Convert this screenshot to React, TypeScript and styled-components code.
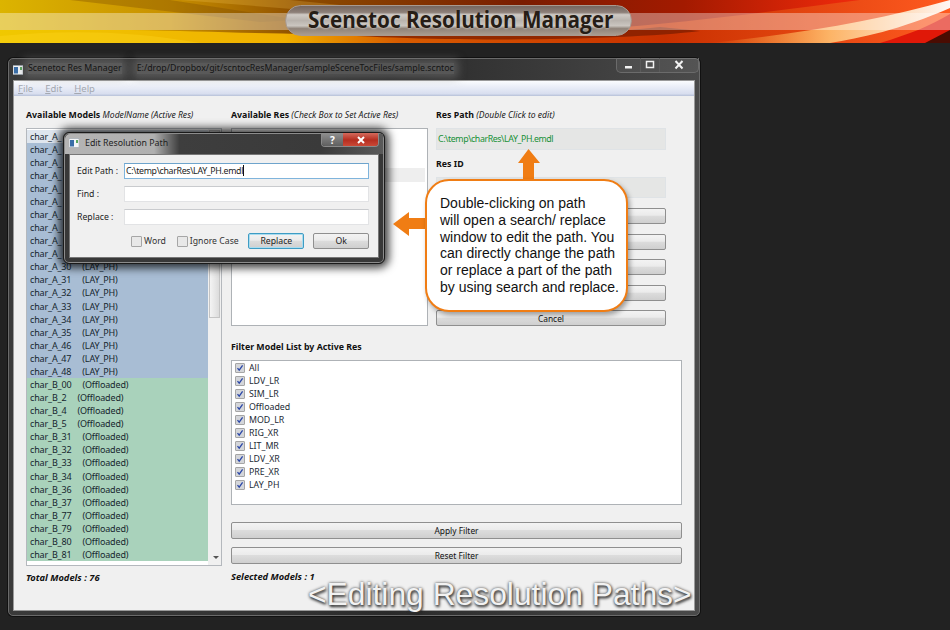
import React from "react";
import styled, { createGlobalStyle } from "styled-components";

const GlobalStyle = createGlobalStyle`
    html, body {
        margin: 0;
        padding: 0;
        background: #222222;
    }
    body {
        width: 950px;
        height: 630px;
        overflow: hidden;
        font-family: "Noto Sans", "Liberation Sans", sans-serif;
    }
`;

const Page = styled.div`
    width: 950px;
    height: 630px;
    background: #222222;
    display: flex;
    flex-direction: column;
    overflow: hidden;
`;

const Banner = styled.header`
    position: relative;
    height: 43px;
    flex: none;
    display: flex;
    justify-content: center;
    align-items: flex-start;
    padding: 5px 33px 0 0;
    box-sizing: border-box;
    overflow: hidden;
`;

const BannerArt = styled.svg`
    position: absolute;
    inset: 0;
`;

const Pill = styled.div`
    position: relative;
    width: 347px;
    height: 31px;
    box-sizing: border-box;
    padding: 0 0 3px 5px;
    border-radius: 16px;
    border: 1px solid #a89a90;
    background: linear-gradient(
        180deg,
        #75665f 0%,
        #8d8079 22%,
        #cfcac5 30%,
        #b9b3ad 50%,
        #cbc6c0 68%,
        #8f8379 78%,
        #a99c8f 100%
    );
    display: flex;
    justify-content: center;
    align-items: center;
`;

const PillTitle = styled.h1`
    margin: 0;
    font-family: "Open Sans", "Noto Sans", sans-serif;
    font-size: 23px;
    font-weight: 700;
    color: #261d16;
    white-space: nowrap;
    transform: scaleX(0.9);
    letter-spacing: 0;
    text-shadow: 0 1px 2px rgba(255, 255, 255, 0.35);
`;

const Win = styled.div`
    position: relative;
    width: 692px;
    height: 558px;
    margin: 15px 0 0 8px;
    box-sizing: border-box;
    padding: 0 5px 4px;
    border: 1px solid #6a6a6a;
    border-radius: 5px;
    background: linear-gradient(90deg, #3a3a3a 0%, #333 40%, #2a2a2a 55%, #4a4a4a 100%);
    box-shadow: 0 0 0 1px #111;
    display: flex;
    flex-direction: column;
`;

const TitleBar = styled.div`
    height: 21px;
    flex: none;
    display: flex;
    align-items: center;
    margin-left: -1px;
`;

const TitleIcon = styled.span`
    display: flex;
    margin-right: 5px;
`;

const TitleText = styled.span`
    font-size: 8.8px;
    color: #141414;
    white-space: pre;
    background: rgba(125, 125, 125, 0.5);
    box-shadow: 0 0 8px 4px rgba(125, 125, 125, 0.5);
    line-height: 11px;
    transform: translateY(-1px);
`;

const TitlePath = styled(TitleText)`
    margin-left: 15px;
`;

const CaptionGroup = styled.div`
    position: absolute;
    top: -1px;
    right: 0;
    width: 83px;
    height: 15px;
    box-sizing: border-box;
    border: 1px solid #6b6b6b;
    border-top: none;
    border-radius: 0 0 5px 5px;
    display: grid;
    grid-template-columns: 24px 19px 1fr;
    background: rgba(255, 255, 255, 0.06);
`;

const CaptionCell = styled.div<{ $divider?: boolean }>`
    display: flex;
    align-items: center;
    justify-content: center;
    color: #fff;
    border-right: ${(p) => (p.$divider ? "1px solid #5a5a5a" : "none")};
`;

const Client = styled.div`
    flex: 1;
    display: flex;
    flex-direction: column;
    background: #f0f0f0;
    border: 1px solid #9a9a9a;
    margin: 0 -1px;
    min-height: 0;
`;

const MenuBar = styled.nav`
    height: 15px;
    flex: none;
    display: flex;
    gap: 12px;
    padding-left: 4px;
    align-items: center;
    background: linear-gradient(180deg, #fbfcfe 0%, #eef1f9 30%, #d8deef 85%, #b6c0d8 100%);
`;

const MenuItem = styled.span`
    font-size: 9.5px;
    color: #a4a8b0;
    &::first-letter {
        text-decoration: underline;
    }
`;

const Body = styled.div`
    display: grid;
    grid-template-columns: 196px 451px;
    column-gap: 9px;
    padding: 12px 0 0 12px;
`;

const Column = styled.div`
    display: flex;
    flex-direction: column;
`;

const Label = styled.div`
    height: 20px;
    font-size: 8.8px;
    font-weight: 700;
    color: #111;
    line-height: 14px;
    white-space: nowrap;
    em {
        font-weight: 400;
        font-size: 8.6px;
        color: #222;
    }
`;

const ModelList = styled.div`
    position: relative;
    height: 438px;
    box-sizing: border-box;
    border: 1px solid #b4b8bd;
    display: flex;
    background: #fff;
    overflow: hidden;
`;

const Rows = styled.div`
    width: 181px;
    flex: none;
    padding-top: 0.5px;
`;

const Row = styled.div<{ $tone: "first" | "blue" | "green" }>`
    height: 13.08px;
    line-height: 13px;
    padding-left: 3px;
    font-size: 9px;
    letter-spacing: -0.15px;
    color: #16262e;
    white-space: pre;
    background: ${(p) =>
        p.$tone === "first" ? "#dfe6ee" : p.$tone === "blue" ? "#a8bdd4" : "#a9d2bb"};
`;

const ScrollTrack = styled.div`
    flex: 1;
    background: #f0f0f0;
    position: relative;
`;

const ScrollThumb = styled.div`
    position: absolute;
    top: 1px;
    left: 1px;
    right: 1px;
    height: 188px;
    box-sizing: border-box;
    border: 1px solid #c4c4c4;
    background: linear-gradient(90deg, #f4f4f4, #dcdcdc);
`;

const ScrollArrow = styled.div`
    position: absolute;
    bottom: 6px;
    left: 5px;
    width: 0;
    height: 0;
    border: 3px solid transparent;
    border-top: 3px solid #555;
    border-bottom: none;
`;

const Footer = styled.div<{ $top?: number }>`
    margin-top: ${(p) => p.$top ?? 6}px;
    font-size: 9.3px;
    font-weight: 700;
    font-style: italic;
    color: #111;
    line-height: 12px;
`;

const TopRow = styled.div`
    display: grid;
    grid-template-columns: 197px 230px;
    column-gap: 8px;
`;

const ResList = styled.div`
    height: 198px;
    box-sizing: border-box;
    border: 1px solid #aeb2b6;
    background: #fff;
    padding-top: 39px;
`;

const ResRow = styled.div`
    height: 14px;
    background: #eeeeee;
    margin-right: 2px;
`;

const ReadBox = styled.div`
    height: 22px;
    box-sizing: border-box;
    border: 1px solid #dfe3e6;
    background: #e5e6e5;
    font-size: 8.8px;
    letter-spacing: -0.4px;
    line-height: 20px;
    padding-left: 1px;
    color: #159035;
    white-space: nowrap;
`;

const SubLabel = styled(Label)`
    margin-top: 7px;
    height: 20px;
`;

const IdBox = styled(ReadBox)`
    height: 21px;
`;

const ButtonStack = styled.div`
    margin-top: 10px;
    display: flex;
    flex-direction: column;
    gap: 9.5px;
`;

const Btn = styled.div<{ $h?: number }>`
    height: ${(p) => p.$h ?? 16}px;
    box-sizing: border-box;
    border: 1px solid #8f8f8f;
    border-radius: 2px;
    background: linear-gradient(180deg, #f3f3f3 0%, #ebebeb 45%, #dcdcdc 50%, #cfcfcf 100%);
    font-size: 8.4px;
    color: #111;
    display: flex;
    align-items: center;
    justify-content: center;
`;

const FilterLabel = styled(Label)`
    margin-top: 14px;
    height: 20px;
`;

const FilterList = styled.div`
    height: 145px;
    box-sizing: border-box;
    border: 1px solid #aeb2b6;
    background: #fff;
    padding: 0 0 0 3px;
    display: flex;
    flex-direction: column;
`;

const FilterRow = styled.div`
    height: 13.05px;
    display: flex;
    align-items: center;
    gap: 4px;
    font-size: 8.8px;
    color: #222a35;
`;

const CheckBox = styled.span<{ $size?: number; $checked?: boolean }>`
    width: ${(p) => p.$size ?? 10}px;
    height: ${(p) => p.$size ?? 10}px;
    box-sizing: border-box;
    flex: none;
    border: 1px solid #a6a6a6;
    border-radius: 1px;
    background: ${(p) => (p.$checked ? "#d4d6da" : "#e8e8e8")};
    display: flex;
    align-items: center;
    justify-content: center;
`;

const FilterButtons = styled.div`
    margin-top: 17px;
    display: flex;
    flex-direction: column;
    gap: 8px;
`;

const Dialog = styled.div`
    position: absolute;
    left: 54px;
    top: 73px;
    width: 322px;
    height: 132px;
    box-sizing: border-box;
    padding: 0 5px 5px;
    border: 1px solid #1a1a1a;
    border-radius: 6px;
    background: #383838;
    box-shadow: 0 0 9px 4px rgba(0, 0, 0, 0.75), inset 0 0 0 1px #8c8c8c;
    display: flex;
    flex-direction: column;
`;

const DialogTitle = styled.div`
    height: 20px;
    flex: none;
    display: flex;
    align-items: center;
    gap: 6px;
    margin: 1px -4px 0;
    padding: 0 0 2px 4px;
    box-sizing: border-box;
    border-radius: 5px 0 0 0;
    font-size: 8.8px;
    color: #222;
    background: linear-gradient(90deg, #b4b4b4 0%, #b0b0b0 28%, #3e3e3e 36%, #3a3a3a 80%, #5a5a5a 100%);
`;

const DialogCaption = styled.div`
    position: absolute;
    top: 0;
    right: 5px;
    width: 58px;
    height: 14px;
    display: grid;
    grid-template-columns: 21px 1fr;
    border: 1px solid #8a8a8a;
    border-top: none;
    border-radius: 0 0 4px 4px;
    overflow: hidden;
    box-sizing: border-box;
    font-size: 10px;
    font-weight: 700;
    color: #fff;
`;

const HelpCell = styled.div`
    background: linear-gradient(180deg, #8f8f8f, #5c5c5c);
    display: flex;
    align-items: center;
    justify-content: center;
`;

const CloseCell = styled.div`
    background: linear-gradient(180deg, #d46a5c 0%, #b52e20 50%, #cf4d3a 100%);
    display: flex;
    align-items: center;
    justify-content: center;
`;

const DialogBody = styled.div`
    flex: 1;
    border: 1px solid #777;
    background: #f0f0f0;
    padding: 8px 9px 0 7px;
    display: flex;
    flex-direction: column;
    gap: 7px;
`;

const FieldRow = styled.div`
    display: flex;
    align-items: center;
    height: 16px;
`;

const FieldLabel = styled.span`
    width: 47px;
    flex: none;
    font-size: 8.7px;
    color: #222;
    white-space: nowrap;
`;

const FieldInput = styled.div<{ $active?: boolean }>`
    flex: 1;
    height: 16px;
    box-sizing: border-box;
    border: 1px solid ${(p) => (p.$active ? "#7fb4dc" : "#e2e3e5")};
    border-top-color: ${(p) => (p.$active ? "#6ea4cc" : "#c9cbce")};
    background: #fff;
    font-size: 8.8px;
    letter-spacing: -0.33px;
    line-height: 14px;
    padding-left: 1px;
    color: #222;
    white-space: nowrap;
`;

const Caret = styled.span`
    display: inline-block;
    width: 1px;
    height: 11px;
    background: #111;
    vertical-align: -2px;
`;

const DialogActions = styled.div`
    margin-top: 1px;
    display: flex;
    align-items: center;
    padding-left: 54px;
    font-size: 8.7px;
    color: #333;
    white-space: nowrap;
`;

const OptionLabel = styled.label<{ $width: number }>`
    display: flex;
    align-items: center;
    gap: 2px;
    width: ${(p) => p.$width}px;
`;

const DialogBtn = styled.div<{ $primary?: boolean }>`
    width: 56px;
    height: 16px;
    box-sizing: border-box;
    border: 1px solid ${(p) => (p.$primary ? "#3e9cc4" : "#8f8f8f")};
    box-shadow: ${(p) => (p.$primary ? "inset 0 0 0 1px #a9dcef" : "none")};
    border-radius: 2px;
    background: linear-gradient(180deg, #f3f3f3 0%, #ebebeb 45%, #dcdcdc 50%, #cfcfcf 100%);
    display: flex;
    align-items: center;
    justify-content: center;
    font-size: 8.7px;
    color: #222;
    margin-right: 9px;
    &:last-child {
        margin-right: 0;
    }
`;

const Callout = styled.div`
    position: absolute;
    left: 416px;
    top: 120px;
    width: 203px;
    height: 133px;
    box-sizing: border-box;
    padding: 14px 0 0 13px;
    background: #fff;
    border: 2px solid #f07d14;
    border-radius: 24px;
    box-shadow: 2px 3px 5px rgba(0, 0, 0, 0.35);
    font-family: "Liberation Sans", Arial, sans-serif;
    font-size: 14px;
    line-height: 16.8px;
    color: #111;
    white-space: nowrap;
`;

const Arrow = styled.svg<{ $x: number; $y: number }>`
    position: absolute;
    left: ${(p) => p.$x}px;
    top: ${(p) => p.$y}px;
`;

const Caption = styled.div`
    position: absolute;
    left: 299px;
    bottom: 4px;
    font-family: "Liberation Sans", Arial, sans-serif;
    font-size: 31.8px;
    line-height: 34px;
    color: #f2f2f2;
    white-space: nowrap;
    text-shadow: 0 0 3px #444, 1px 2px 3px #222;
`;

const Grip = styled.div`
    position: absolute;
    right: 6px;
    bottom: 5px;
    width: 6px;
    height: 6px;
    background-image: radial-gradient(#aaa 40%, transparent 45%);
    background-size: 2px 2px;
`;

// the first ten rows sit under the dialog, only their prefix shows
const COVERED_ROWS = 10;
const MODELS_A = ["30", "31", "32", "33", "34", "35", "46", "47", "48"];
const MODELS_B = ["00", "2", "4", "5", "31", "32", "33", "34", "36", "37", "77", "79", "80", "81"];
const FILTERS = ["All", "LDV_LR", "SIM_LR", "Offloaded", "MOD_LR", "RIG_XR", "LIT_MR", "LDV_XR", "PRE_XR", "LAY_PH"];

function AppIcon() {
    return (
        <svg width="10" height="10" viewBox="0 0 10 10" style={{ flex: "none" }}>
            <rect x="0" y="0.5" width="10" height="9" fill="#f4f6f8" stroke="#9aa4ae" strokeWidth="0.6" />
            <rect x="1" y="2" width="4" height="6.5" fill="#3a6ea8" />
            <rect x="7" y="2" width="2" height="3" fill="#5aa860" />
        </svg>
    );
}

function Tick() {
    return (
        <svg width="8" height="8" viewBox="0 0 8 8">
            <path d="M1.5 4.2 L3.2 6.2 L6.6 1.4" fill="none" stroke="#2b47a8" strokeWidth="1.3" />
        </svg>
    );
}

function BannerBackground() {
    return (
        <BannerArt width="950" height="43" viewBox="0 0 950 43" preserveAspectRatio="none">
            <defs>
                <linearGradient id="base" x1="0" x2="1" y1="0" y2="0">
                    <stop offset="0" stopColor="#dcb400" />
                    <stop offset="0.18" stopColor="#c89000" />
                    <stop offset="0.32" stopColor="#8c4c00" />
                    <stop offset="0.55" stopColor="#7a1c00" />
                    <stop offset="0.72" stopColor="#a31a00" />
                    <stop offset="0.88" stopColor="#e8280a" />
                    <stop offset="1" stopColor="#ff3a18" />
                </linearGradient>
                <linearGradient id="low" x1="0" x2="1" y1="0" y2="0">
                    <stop offset="0" stopColor="#f0c800" />
                    <stop offset="0.3" stopColor="#f0b000" />
                    <stop offset="0.42" stopColor="#d85c00" />
                    <stop offset="0.7" stopColor="#c83000" />
                    <stop offset="1" stopColor="#ff5a20" />
                </linearGradient>
                <linearGradient id="glow" x1="0" x2="1" y1="0" y2="0">
                    <stop offset="0" stopColor="#ffb040" stopOpacity="0" />
                    <stop offset="0.5" stopColor="#ffc070" stopOpacity="0.9" />
                    <stop offset="1" stopColor="#ffffff" stopOpacity="0.95" />
                </linearGradient>
            </defs>
            <rect width="950" height="43" fill="url(#base)" />
            <path d="M0 30 L130 30 C240 32 300 36 470 34 C620 32 720 18 860 0 L950 0 L950 43 L0 43 Z" fill="url(#low)" />
            <path d="M300 32 C420 38 560 38 660 27 L700 31 C620 41 420 43 300 32 Z" fill="#7c1e00" opacity="0.75" />
            <path d="M70 0 L170 0 L300 20 L260 22 Z" fill="#7a4a00" opacity="0.35" />
            <path d="M180 0 L290 0 L420 13 L380 16 Z" fill="#ffd060" opacity="0.22" />
            <path d="M0 36 C60 30 130 30 200 43 L0 43 Z" fill="#ffd820" opacity="0.35" />
            <path d="M710 43 C800 34 880 20 950 0 L950 8 C900 30 860 38 830 43 Z" fill="url(#glow)" />
            <path d="M880 43 C910 34 930 26 950 14 L950 43 Z" fill="#e01808" />
            <path d="M925 43 L950 30 L950 43 Z" fill="#4a0c02" />
            <rect x="0" y="13" width="950" height="17" fill="#ffffff" opacity="0.36" />
        </BannerArt>
    );
}

export default function App() {
    return (
        <Page>
            <GlobalStyle />
            <Banner>
                <BannerBackground />
                <Pill>
                    <PillTitle>Scenetoc Resolution Manager</PillTitle>
                </Pill>
            </Banner>

            <Win>
                <TitleBar>
                    <TitleIcon><AppIcon /></TitleIcon>
                    <TitleText>Scenetoc Res Manager</TitleText>
                    <TitlePath>E:/drop/Dropbox/git/scntocResManager/sampleSceneTocFiles/sample.scntoc</TitlePath>
                </TitleBar>
                <CaptionGroup>
                    <CaptionCell $divider>
                        <svg width="10" height="10" viewBox="0 0 10 10"><rect x="1" y="6" width="7" height="2.5" fill="#f2f2f2" /></svg>
                    </CaptionCell>
                    <CaptionCell $divider>
                        <svg width="10" height="10" viewBox="0 0 10 10"><rect x="1.5" y="1.5" width="7" height="6" fill="none" stroke="#f2f2f2" strokeWidth="1.5" /></svg>
                    </CaptionCell>
                    <CaptionCell>
                        <svg width="10" height="10" viewBox="0 0 10 10"><path d="M1.5 1 L8.5 8.5 M8.5 1 L1.5 8.5" stroke="#f2f2f2" strokeWidth="2" /></svg>
                    </CaptionCell>
                </CaptionGroup>

                <Client>
                    <MenuBar>
                        <MenuItem>File</MenuItem>
                        <MenuItem>Edit</MenuItem>
                        <MenuItem>Help</MenuItem>
                    </MenuBar>
                    <Body>
                        <Column>
                            <Label>Available Models <em>ModelName (Active Res)</em></Label>
                            <ModelList>
                                <Rows>
                                    {Array.from({ length: COVERED_ROWS }, (_, i) => (
                                        <Row key={"covered" + i} $tone={i === 0 ? "first" : "blue"}>char_A_</Row>
                                    ))}
                                    {MODELS_A.map((id) => (
                                        <Row key={"a" + id} $tone="blue">{`char_A_${id}     (LAY_PH)`}</Row>
                                    ))}
                                    {MODELS_B.map((id) => (
                                        <Row key={"b" + id} $tone="green">{`char_B_${id}     (Offloaded)`}</Row>
                                    ))}
                                </Rows>
                                <ScrollTrack>
                                    <ScrollThumb />
                                    <ScrollArrow />
                                </ScrollTrack>
                            </ModelList>
                            <Footer>Total Models : 76</Footer>
                        </Column>

                        <Column>
                            <TopRow>
                                <Column>
                                    <Label>Available Res <em>(Check Box to Set Active Res)</em></Label>
                                    <ResList>
                                        <ResRow />
                                    </ResList>
                                </Column>
                                <Column>
                                    <Label>Res Path <em>(Double Click to edit)</em></Label>
                                    <ReadBox>C:\temp\charRes\LAY_PH.emdl</ReadBox>
                                    <SubLabel>Res ID</SubLabel>
                                    <IdBox />
                                    <ButtonStack>
                                        <Btn />
                                        <Btn />
                                        <Btn />
                                        <Btn />
                                        <Btn>Cancel</Btn>
                                    </ButtonStack>
                                </Column>
                            </TopRow>
                            <FilterLabel>Filter Model List by Active Res</FilterLabel>
                            <FilterList>
                                {FILTERS.map((name) => (
                                    <FilterRow key={name}>
                                        <CheckBox $checked><Tick /></CheckBox>
                                        {name}
                                    </FilterRow>
                                ))}
                            </FilterList>
                            <FilterButtons>
                                <Btn $h={17}>Apply Filter</Btn>
                                <Btn $h={17}>Reset Filter</Btn>
                            </FilterButtons>
                            <Footer $top={7}>Selected Models : 1</Footer>
                        </Column>
                    </Body>
                </Client>

                <Dialog>
                    <DialogTitle>
                        <AppIcon />
                        Edit Resolution Path
                    </DialogTitle>
                    <DialogCaption>
                        <HelpCell>?</HelpCell>
                        <CloseCell>
                            <svg width="10" height="10" viewBox="0 0 10 10"><path d="M2 2 L8 8 M8 2 L2 8" stroke="#fff" strokeWidth="2" /></svg>
                        </CloseCell>
                    </DialogCaption>
                    <DialogBody>
                        <FieldRow>
                            <FieldLabel>Edit Path :</FieldLabel>
                            <FieldInput $active>C:\temp\charRes\LAY_PH.emdl<Caret /></FieldInput>
                        </FieldRow>
                        <FieldRow>
                            <FieldLabel>Find :</FieldLabel>
                            <FieldInput />
                        </FieldRow>
                        <FieldRow>
                            <FieldLabel>Replace :</FieldLabel>
                            <FieldInput />
                        </FieldRow>
                        <DialogActions>
                            <OptionLabel $width={46}><CheckBox $size={11} />Word</OptionLabel>
                            <OptionLabel $width={72}><CheckBox $size={11} />Ignore Case</OptionLabel>
                            <DialogBtn $primary>Replace</DialogBtn>
                            <DialogBtn>Ok</DialogBtn>
                        </DialogActions>
                    </DialogBody>
                </Dialog>

                <Arrow $x={509} $y={90} width="24" height="32" viewBox="0 0 24 32">
                    <path d="M10.5 0 L22 14 L16 14 L16 32 L5 32 L5 14 L0 14 Z" fill="#f07d14" />
                </Arrow>
                <Arrow $x={384} $y={153} width="34" height="24" viewBox="0 0 34 24">
                    <path d="M0 12 L16 0 L16 6 L34 6 L34 17 L16 17 L16 24 Z" fill="#f07d14" />
                </Arrow>
                <Callout>
                    Double-clicking on path<br />
                    will open a search/ replace<br />
                    window to edit the path. You<br />
                    can directly change the path<br />
                    or replace a part of the path<br />
                    by using search and replace.
                </Callout>

                <Caption>&lt;Editing Resolution Paths&gt;</Caption>
                <Grip />
            </Win>
        </Page>
    );
}
